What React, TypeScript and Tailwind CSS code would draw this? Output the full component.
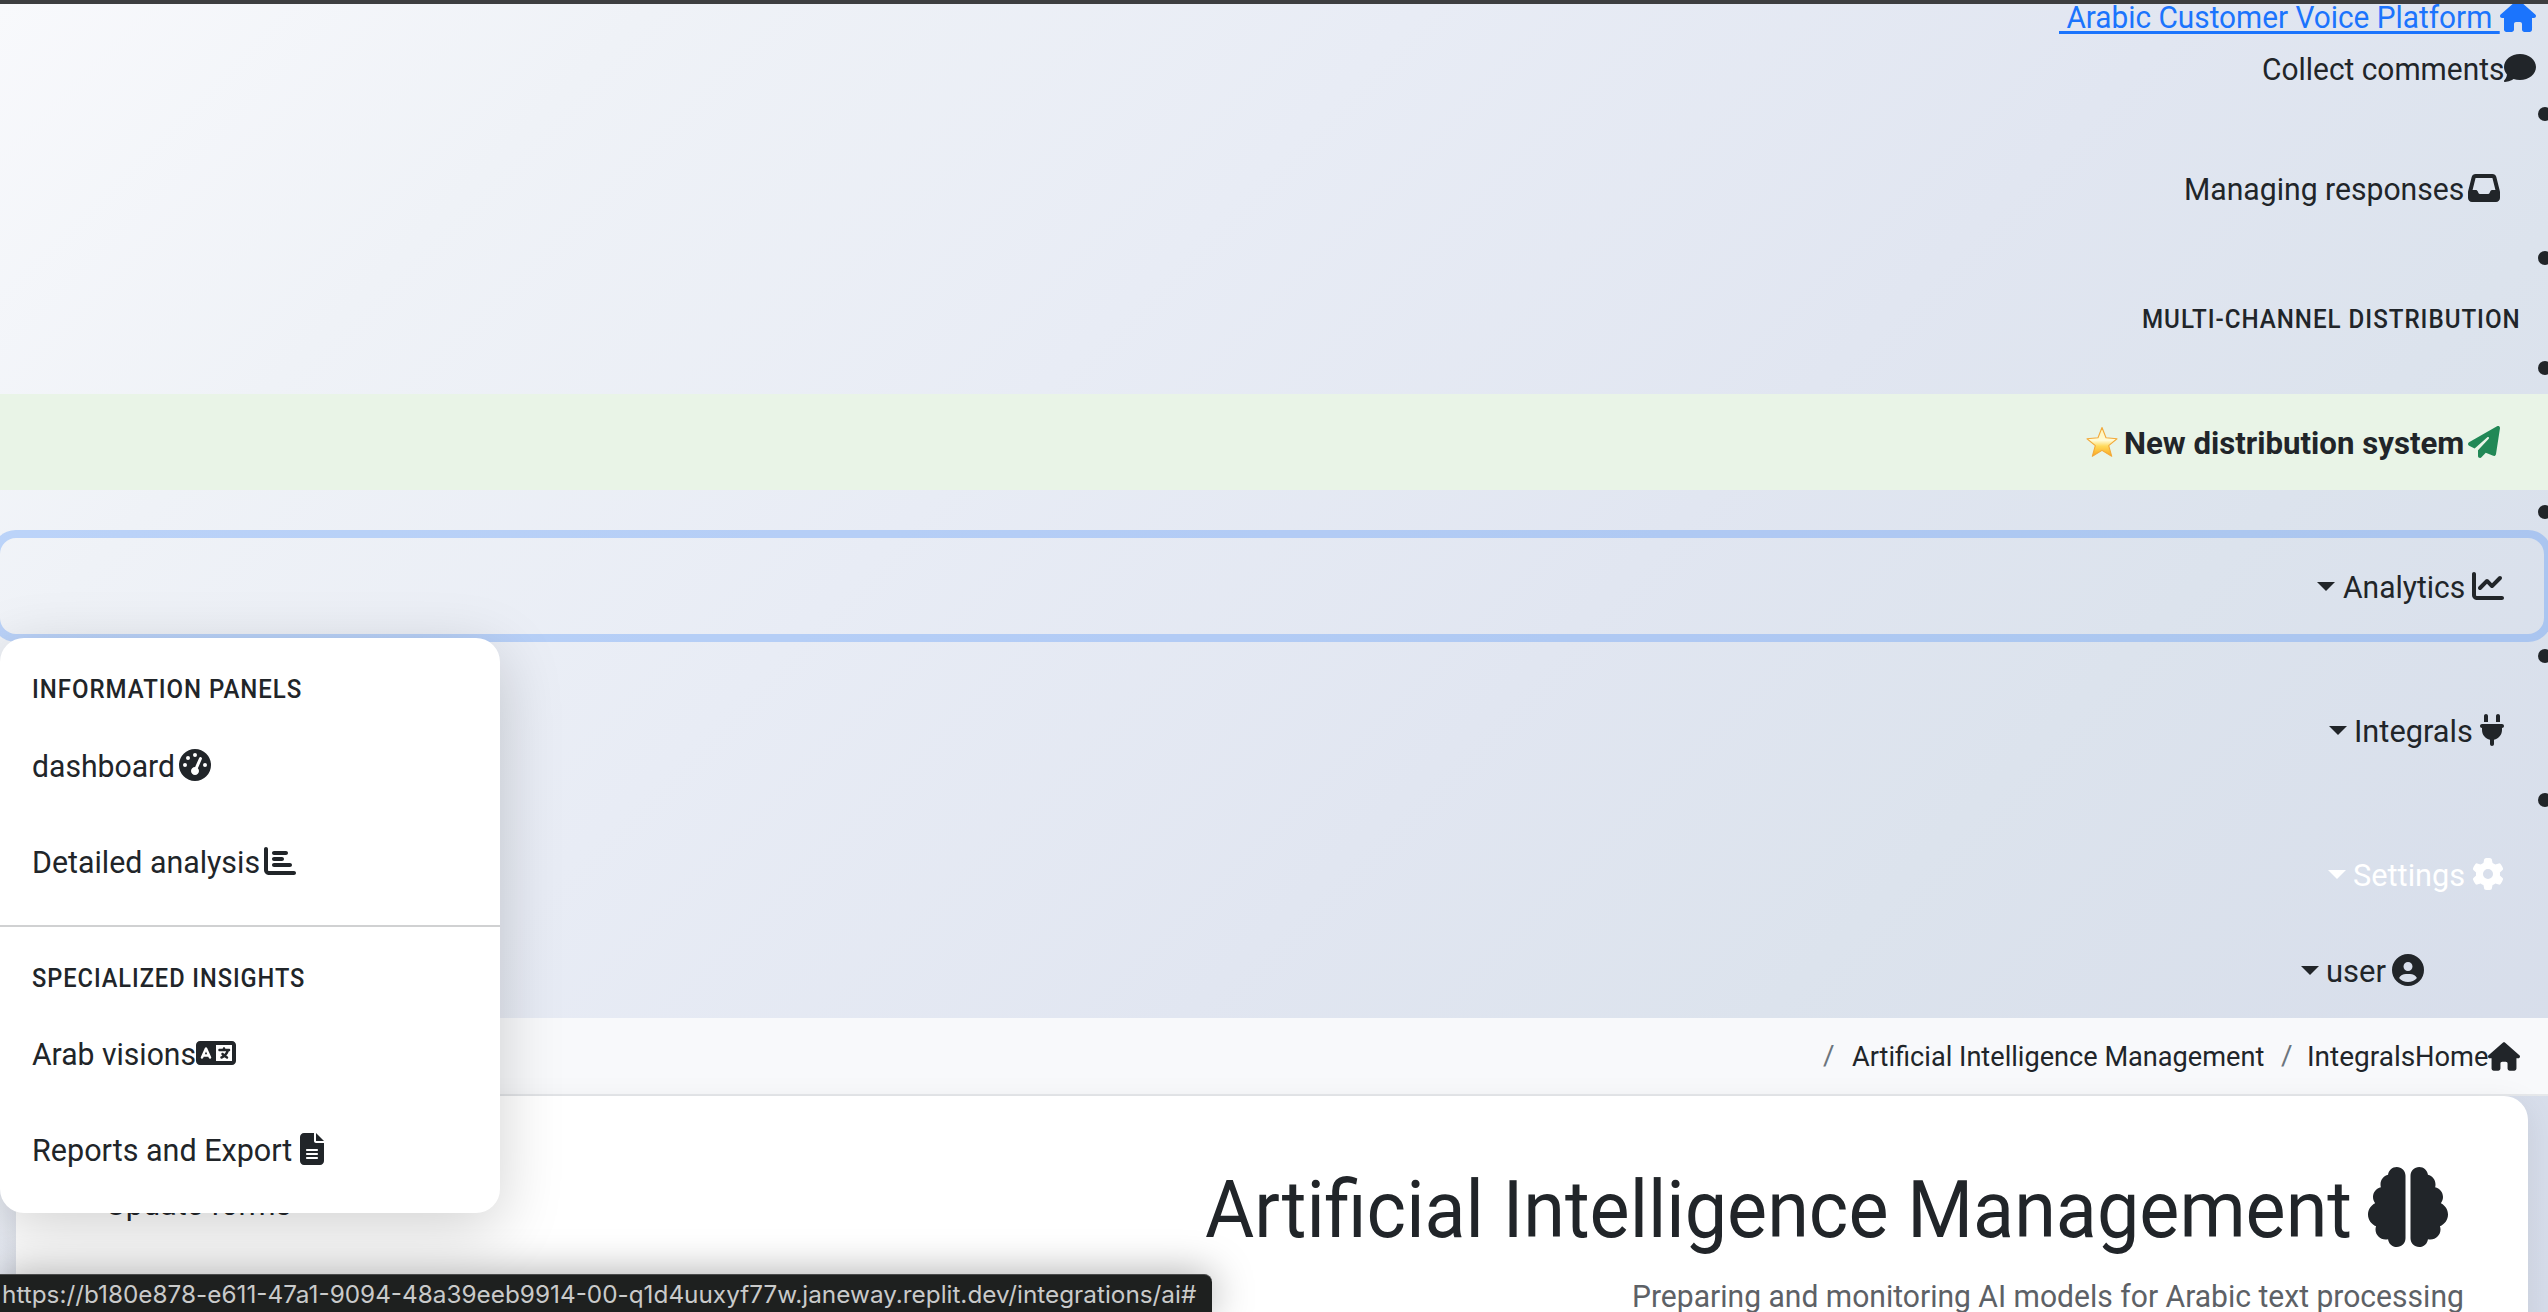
import { useLayoutEffect, useRef, useState, type ReactNode } from "react";
import {
  FaBrain,
  FaChartBar,
  FaChartLine,
  FaCircleUser,
  FaComment,
  FaFileLines,
  FaGaugeHigh,
  FaGear,
  FaHouse,
  FaInbox,
  FaLanguage,
  FaPaperPlane,
  FaPlug,
} from "react-icons/fa6";

/** One line of text condensed to fill its box. The box width comes from className. */
function Label({
  children,
  className,
  textClass = "",
}: {
  children: string;
  className: string;
  textClass?: string;
}) {
  const box = useRef<HTMLSpanElement>(null);
  const text = useRef<HTMLSpanElement>(null);
  const [scale, setScale] = useState(1);
  useLayoutEffect(() => {
    if (box.current && text.current) {
      setScale(box.current.offsetWidth / text.current.offsetWidth);
    }
  }, []);
  return (
    <span ref={box} className={`block shrink-0 whitespace-pre ${className}`}>
      <span ref={text} className={`inline-block origin-left ${textClass}`} style={{ transform: `scaleX(${scale})` }}>
        {children}
      </span>
    </span>
  );
}

function Caret() {
  return <span className="h-0 w-0 border-x-[9px] border-t-[9px] border-x-transparent border-t-current" />;
}

function Star() {
  return (
    <svg viewBox="0 0 32 32" className="mr-1.5 h-8 w-8 shrink-0">
      <defs>
        <linearGradient id="star" x1="0" y1="0" x2="0" y2="1">
          <stop offset="0" stopColor="#fff3b0" />
          <stop offset="0.45" stopColor="#fffbd6" />
          <stop offset="0.65" stopColor="#ffd95a" />
          <stop offset="1" stopColor="#fba61c" />
        </linearGradient>
      </defs>
      <path
        d="M16 1.5 20 11.8 31 12.8 22.7 19.6 25.7 30.3 16 24.4 6.3 30.3 9.3 19.6 1 12.8 12 11.8Z"
        fill="url(#star)"
        stroke="#f2a93b"
        strokeWidth="1.1"
        strokeLinejoin="round"
      />
    </svg>
  );
}

function NavItem({
  children,
  className = "",
  markerClass = "-top-[33px]",
}: {
  children: ReactNode;
  className?: string;
  markerClass?: string;
}) {
  return (
    <li className={`relative flex items-center justify-end ${className}`}>
      <span className={`absolute right-[-4px] h-3.5 w-3.5 rounded-full bg-[#212529] ${markerClass}`} />
      {children}
    </li>
  );
}

export default function App() {
  return (
    <div className="relative flex h-[1312px] w-[2548px] flex-col overflow-hidden bg-[linear-gradient(135deg,#f8f9fc_0%,#eff2f7_17%,#e8ecf5_37%,#e1e6f1_57%,#dce3ed_72%,#d6dcea_100%)] font-[Roboto,sans-serif] text-[31px] leading-[48px] text-[#212529]">
      <div className="absolute inset-x-0 top-0 z-10 h-1 bg-[#3d3e40]" />

      <nav className="flex flex-col">
        <a className="flex h-8 items-center justify-end pr-3 text-[#1b74fd]">
          <Label
            className="w-[441px] pt-[3px]"
            textClass="underline decoration-[3px] underline-offset-[3px] [text-decoration-skip-ink:none]"
          >
            {"\u00a0Arabic Customer Voice Platform\u00a0"}
          </Label>
          <FaHouse className="h-8 w-9" />
        </a>
        <div className="flex h-[72px] items-center justify-end pr-3">
          <Label className="w-[242px] pt-[3px]">Collect comments</Label>
          <FaComment className="h-8 w-8" />
        </div>
        <ul className="flex flex-col">
          <NavItem className="mt-9 h-24 pr-12">
            <Label className="mr-1 w-[280px] pt-[3px]">Managing responses</Label>
            <FaInbox className="h-8 w-8" />
          </NavItem>
          <NavItem className="mt-9 h-[94px] pr-[27px]" markerClass="-top-[21px]">
            <Label className="w-[379px] pt-px text-[25px] font-medium tracking-[1px]">MULTI-CHANNEL DISTRIBUTION</Label>
          </NavItem>
          <NavItem className="mt-7 h-24 bg-[#e9f4e7] pr-12">
            <Star />
            <Label className="mr-1 w-[340px] pt-[3px] font-bold">New distribution system</Label>
            <FaPaperPlane className="h-8 w-8 text-[#218856]" />
          </NavItem>
          <NavItem className="mt-12 h-24">
            <div className="mr-1 flex h-24 flex-1 items-center justify-end rounded-2xl pr-10 shadow-[0_0_0_8px_rgba(27,116,253,0.25)]">
              <Caret />
              <Label className="mr-[7px] ml-2 w-[122px] pt-[3px]">Analytics</Label>
              <FaChartLine className="h-8 w-8" />
            </div>
          </NavItem>
          <NavItem className="mt-12 h-24 pr-11">
            <Caret />
            <Label className="mx-[7px] w-[119px] pt-[3px]">Integrals</Label>
            <FaPlug className="h-8 w-6" />
          </NavItem>
          <NavItem className="mt-12 h-24 pr-11 text-white">
            <Caret />
            <Label className="mx-[7px] w-[112px] pt-[3px]">Settings</Label>
            <FaGear className="h-8 w-8" />
          </NavItem>
        </ul>
        <div className="flex h-24 items-center justify-end pr-[124px]">
          <Caret />
          <Label className="mr-1.5 ml-[7px] w-[60px] pt-[3px]">user</Label>
          <FaCircleUser className="h-8 w-8" />
        </div>
      </nav>

      <div className="flex h-[78px] shrink-0 items-center justify-end border-b-2 border-[#e6e8eb] bg-[#f8f9fb] pr-7 text-[28px]">
        <Label className="mr-[17px] w-3 text-[#6c757d]">/</Label>
        <Label className="mr-[17px] w-[412px] pt-px">Artificial Intelligence Management</Label>
        <Label className="mr-[14px] w-3 text-[#6c757d]">/</Label>
        <Label className="w-[108px] pt-px">Integrals</Label>
        <Label className="w-[73px] pt-px">Home</Label>
        <FaHouse className="h-[29px] w-8" />
      </div>

      <main className="mr-5 ml-4 h-[400px] shrink-0 rounded-3xl bg-white pt-[63px] shadow-[0_8px_32px_rgba(0,0,0,0.08)]">
        <div className="flex h-24 items-center justify-between pr-20 pl-[90px]">
          <Label className="w-[185px] pb-[5px]">Update forms</Label>
          <h1 className="flex items-center text-[79px] leading-[96px]">
            <Label className="mr-4 w-[1147px] pt-[5px]">Artificial Intelligence Management</Label>
            <FaBrain className="h-20 w-20" />
          </h1>
        </div>
        <p className="mt-[18px] flex justify-end pr-16 text-[#5d6166]">
          <Label className="w-[832px]">Preparing and monitoring AI models for Arabic text processing</Label>
        </p>
      </main>

      <div className="absolute top-[638px] left-0 h-[575px] w-[500px] rounded-3xl bg-white pt-4 shadow-[0_16px_64px_rgba(0,0,0,0.18)]">
        <div className="flex h-[63px] items-center pt-[7px] pl-8">
          <Label className="w-[270px] pt-px text-[25px] font-medium tracking-[1px]">INFORMATION PANELS</Label>
        </div>
        <div className="flex h-24 items-center pl-8">
          <Label className="mr-1 w-[143px] pt-[3px]">dashboard</Label>
          <FaGaugeHigh className="h-8 w-8" />
        </div>
        <div className="flex h-24 items-center pl-8">
          <Label className="mr-1 w-[228px] pt-[3px]">Detailed analysis</Label>
          <FaChartBar className="h-8 w-8" />
        </div>
        <div className="mt-4 border-t-2 border-[#d0d1d2]" />
        <div className="flex h-[78px] items-center pt-6 pl-8">
          <Label className="w-[273px] pt-px text-[25px] font-medium tracking-[1px]">SPECIALIZED INSIGHTS</Label>
        </div>
        <div className="flex h-24 items-center pl-8">
          <Label className="w-[164px] pt-[3px]">Arab visions</Label>
          <FaLanguage className="h-8 w-10" />
        </div>
        <div className="flex h-24 items-center pl-8">
          <Label className="mr-2 w-[260px] pt-[3px]">Reports and Export</Label>
          <FaFileLines className="h-8 w-6" />
        </div>
      </div>

      <div className="absolute bottom-0 left-0 flex h-[38px] w-[1212px] items-center rounded-tr-lg border-t border-[#4a4b4b] bg-[#1e201f] pl-0.5 font-[Inter,sans-serif] text-[24px] leading-[38px] text-[#c9caca] shadow-[0_0_40px_rgba(0,0,0,0.35)]">
        <Label className="w-[1194px] pt-[3px]">
          https://b180e878-e611-47a1-9094-48a39eeb9914-00-q1d4uuxyf77w.janeway.replit.dev/integrations/ai#
        </Label>
      </div>
    </div>
  );
}
